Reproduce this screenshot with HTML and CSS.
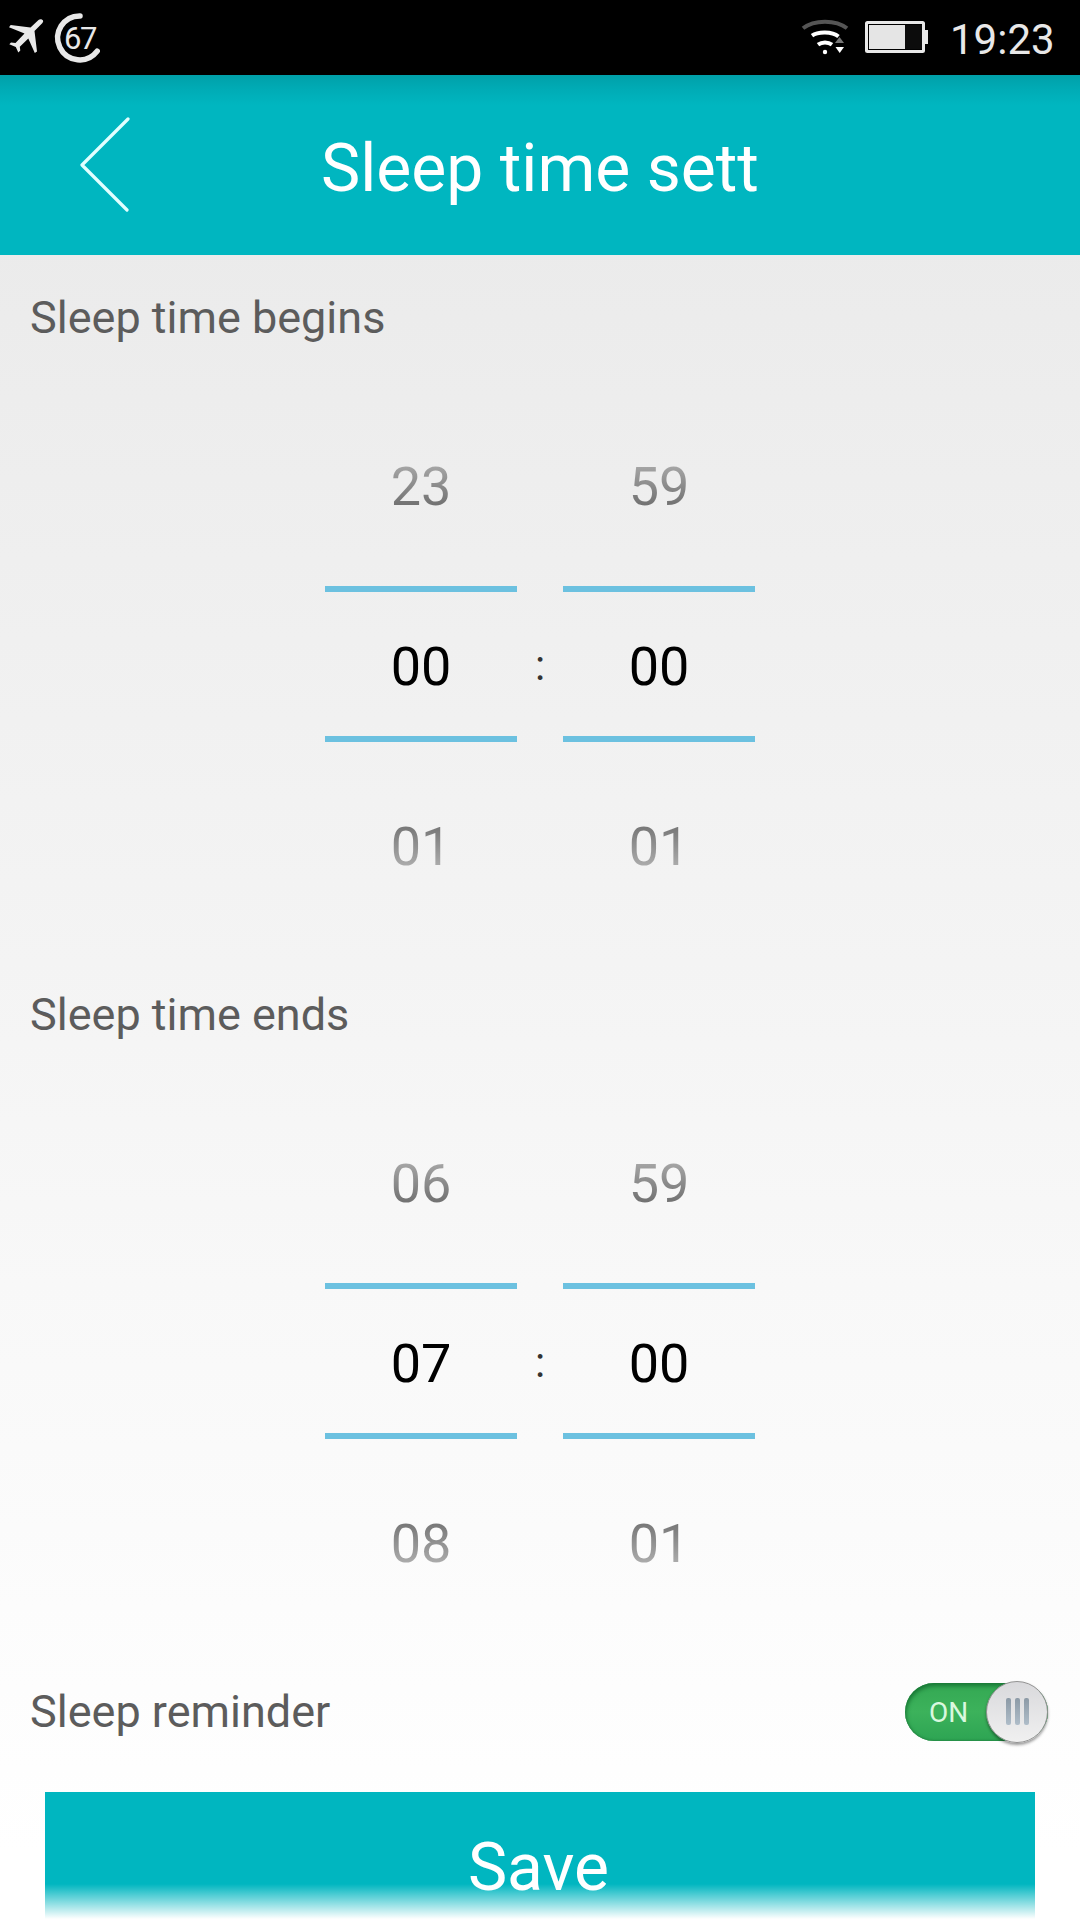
FILE: index.html
```
<!DOCTYPE html>
<html lang="en">
<head>
  <meta charset="UTF-8" />
  <meta name="viewport" content="width=device-width, initial-scale=1.0"/>
  <title>Sleep time settings</title>
  <link rel="stylesheet" href="styles.css">
</head>
<body>
  <div class="screen">
    <div class="status-bar">
      <svg class="status-left" width="110" height="75" viewBox="0 0 110 75">
        <path fill="#e8e8e8" d="M38.5 20c1.500-1.500 4-.9 4.500.6.400 1-.1 2-.8 2.700L34.500 31 37 51.500 34.800 53 28.300 38.500 19.800 46.800 20.300 50.500 18.300 52.500 15.800 47 9.300 44.300 11 42.500 15.500 43 24.500 33.500 9 27.200 10.700 25 30.500 27.500z"/>
        <path fill="none" stroke="#e8e8e8" stroke-width="5.500" stroke-linecap="round" d="M80 15.900A22 22 0 1 0 97.200 51.200"/>
        <text class="battery-level" x="64" y="49.300">67</text>
      </svg>
      <div class="status-right">
        <svg width="148" height="75" viewBox="0 0 148 75">
          <path fill="none" stroke="#555" stroke-width="4" d="M3 28.300C14 19.400 36 19.400 47 28.300"/>
          <path fill="none" stroke="#fff" stroke-width="4" d="M12 35.700C18 31.400 32 31.400 38.500 36.500"/>
          <path fill="none" stroke="#fff" stroke-width="4" d="M18 44.700C22 41.700 28 41.700 32 44.700"/>
          <circle cx="25" cy="52" r="2.200" fill="#fff"/>
          <path fill="#777" d="M39.500 37l4.500 6h-9z"/>
          <path fill="#fff" d="M35.500 47h8.500l-4.300 6z"/>
          <rect x="66.500" y="22.500" width="57" height="29" rx="1" fill="none" stroke="#e8e8e8" stroke-width="3"/>
          <rect x="69" y="25" width="36" height="24" fill="#e5e5e5"/>
          <rect x="105" y="25" width="17" height="24" fill="#0c0c0c"/>
          <path fill="#e8e8e8" d="M124 30h4v14h-4z"/>
        </svg>
        <span class="clock">19:23</span>
      </div>
    </div>

    <div class="header">
      <svg class="back" width="56" height="104" viewBox="0 0 56 104">
        <path fill="none" stroke="#e2ffff" stroke-width="3.200" stroke-linecap="round" stroke-linejoin="round" d="M48 7L2 53 47 98"/>
      </svg>
      <h1 class="title">Sleep time sett</h1>
    </div>

    <div class="section">
      <div class="label">Sleep time begins</div>
      <div class="picker">
        <div class="column">
          <div class="value prev">23</div>
          <div class="value current">00</div>
          <div class="value next">01</div>
        </div>
        <div class="colon">:</div>
        <div class="column">
          <div class="value prev">59</div>
          <div class="value current">00</div>
          <div class="value next">01</div>
        </div>
      </div>
    </div>

    <div class="section">
      <div class="label">Sleep time ends</div>
      <div class="picker">
        <div class="column">
          <div class="value prev">06</div>
          <div class="value current">07</div>
          <div class="value next">08</div>
        </div>
        <div class="colon">:</div>
        <div class="column">
          <div class="value prev">59</div>
          <div class="value current">00</div>
          <div class="value next">01</div>
        </div>
      </div>
    </div>

    <div class="reminder">
      <div class="label">Sleep reminder</div>
      <div class="toggle">
        <span class="toggle-text">ON</span>
        <div class="knob"><i></i><i></i><i></i></div>
      </div>
    </div>

    <button class="save">Save</button>
    <div class="fade"></div>
  </div>
</body>
</html>
```
FILE: styles.css
```
* {
  box-sizing: border-box;
}
body {
  margin: 0;
  font-family: Roboto, "Noto Sans", sans-serif;
}
.screen {
  position: relative;
  display: flex;
  flex-direction: column;
  width: 1080px;
  height: 1920px;
  overflow: hidden;
  background: linear-gradient(#e9e9e9 75px, #ffffff 1850px);
}
.status-bar {
  display: flex;
  flex: none;
  justify-content: space-between;
  height: 75px;
  background: #000;
}
.battery-level {
  fill: #e8e8e8;
  font-size: 31px;
  letter-spacing: -1.5px;
}
.status-right {
  display: flex;
  padding-right: 25px;
}
.clock {
  width: 105px;
  margin-left: 2px;
  padding-top: 4px;
  color: #e8e8e8;
  font-size: 42px;
  line-height: 71px;
}
.header {
  display: grid;
  flex: none;
  grid-template-columns: 160px 1fr 160px;
  height: 180px;
  background: linear-gradient(#00a0a9, #00acb6 15px, #00b6c0 30px);
}
.back {
  margin: 37px 0 0 80px;
}
.title {
  margin: 0;
  padding-top: 7px;
  color: #fff;
  font-size: 66px;
  font-weight: 400;
  line-height: 173px;
  text-align: center;
}
.section {
  flex: none;
  height: 697px;
}
.label {
  padding-left: 30px;
  color: #5c5c5c;
  font-size: 45px;
  line-height: 125px;
}
.picker {
  display: flex;
  justify-content: center;
  height: 540px;
  margin-top: 17px;
}
.column {
  width: 192px;
}
.value {
  height: 180px;
  font-size: 54px;
  line-height: 180px;
  text-align: center;
}
.current {
  height: 156px;
  margin: 9px 0 15px;
  border-top: 6px solid #6cc1e0;
  border-bottom: 6px solid #6cc1e0;
  color: #000;
  line-height: 150px;
}
.prev,
.next {
  color: transparent;
  -webkit-background-clip: text;
  background-clip: text;
}
.prev {
  background-image: linear-gradient(#a6a6a6 38%, #727272 60%);
}
.next {
  background-image: linear-gradient(#767676 38%, #aaaaaa 60%);
}
.colon {
  width: 46px;
  color: #333;
  font-size: 42px;
  line-height: 538px;
  text-align: center;
}
.reminder {
  display: flex;
  flex: none;
  align-items: center;
  justify-content: space-between;
  height: 125px;
  padding-right: 32px;
}
.toggle {
  display: flex;
  align-items: center;
  justify-content: space-between;
  width: 143px;
  height: 58px;
  padding-left: 24px;
  border-radius: 29px;
  background: linear-gradient(#34a853, #3cb25b 50%, #2da453);
  box-shadow: inset 1px 3px 4px #187735, inset 0 -1px 2px #278d47;
}
.toggle-text {
  padding-top: 2px;
  color: #d9f8df;
  font-size: 28px;
}
.knob {
  display: flex;
  flex: none;
  align-items: center;
  justify-content: center;
  gap: 4px;
  width: 62px;
  height: 62px;
  border: 1px solid #929292;
  border-radius: 50%;
  background: linear-gradient(#d9d9dc, #f0f0f0);
  box-shadow: 0 2px 3px rgba(0, 0, 0, 0.4);
}
.knob i {
  width: 5px;
  height: 27px;
  border-radius: 2px;
  background: linear-gradient(#8c9aa6, #afbdc9);
}
.save {
  flex: none;
  width: 990px;
  height: 151px;
  margin: 18px 0 0 45px;
  padding: 0 3px 0 0;
  border: 0;
  background: #00b6c0;
  color: #fff;
  font-family: inherit;
  font-size: 66px;
}
/* scroll edge at the bottom of the list */
.fade {
  position: absolute;
  right: 0;
  bottom: 0;
  left: 0;
  height: 36px;
  background: linear-gradient(rgba(255, 255, 255, 0), #fff 35px);
}
```
